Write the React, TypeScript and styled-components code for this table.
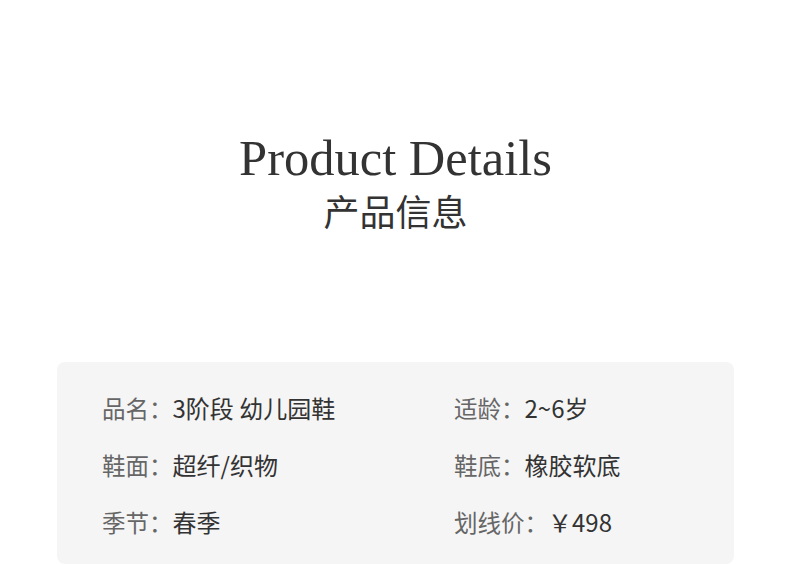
import styled, { createGlobalStyle } from 'styled-components';

const GlobalStyle = createGlobalStyle`
    html, body {
        margin: 0;
        padding: 0;
        background: #ffffff;
    }
`;

const Page = styled.div`
    width: 790px;
    height: 565px;
    box-sizing: border-box;
    padding: 130px 56px 0 57px;
    display: flex;
    flex-direction: column;
    overflow: hidden;
`;

const Header = styled.header`
    display: flex;
    flex-direction: column;
    align-items: center;
    color: #333333;
`;

const Title = styled.h1`
    margin: 0;
    font-family: 'Liberation Serif', 'Times New Roman', serif;
    font-weight: normal;
    font-size: 50.5px;
    line-height: 56px;
`;

const Subtitle = styled.h2`
    margin: 0;
    font-family: 'Noto Sans CJK SC', sans-serif;
    font-weight: normal;
    font-size: 36px;
    line-height: 48px;
`;

const Panel = styled.section`
    margin-top: 128px;
    background: #f5f5f5;
    border-radius: 8px;
    padding: 22px 46px 18px 45px;
    display: grid;
    grid-template-columns: 352px 1fr;
    row-gap: 9px;
`;

const Item = styled.div`
    font-family: 'Noto Sans CJK SC', sans-serif;
    font-size: 24px;
    line-height: 48px;
    white-space: nowrap;
`;

const Label = styled.span`
    color: #666666;
    font-size: 23.5px;
`;

const Value = styled.span`
    color: #333333;
`;

const items: [string, string][] = [
    ['品名：', '3阶段 幼儿园鞋'],
    ['适龄：', '2~6岁'],
    ['鞋面：', '超纤/织物'],
    ['鞋底：', '橡胶软底'],
    ['季节：', '春季'],
    ['划线价：', '￥498'],
];

const App = () => (
    <>
        <GlobalStyle />
        <Page>
            <Header>
                <Title>Product Details</Title>
                <Subtitle>产品信息</Subtitle>
            </Header>
            <Panel>
                {items.map(([label, value]) => (
                    <Item key={label}>
                        <Label>{label}</Label>
                        <Value>{value}</Value>
                    </Item>
                ))}
            </Panel>
        </Page>
    </>
);

export default App;
